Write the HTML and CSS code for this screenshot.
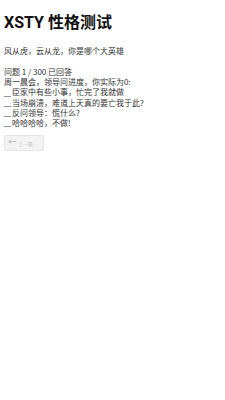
FILE: index.html
```html
<html>
  <head>
    <meta charset="utf-8">
    <link rel="stylesheet" href="styles.css">
  </head>
  <body>
    <h1 class="title">XSTY 性格测试</h1>
    <p class="slogan">风从虎，云从龙，你是哪个大英雄</p>
    <div class="quiz">
      <div class="progress">问题 1 / 300 已回答</div>
      <div class="question">周一晨会，领导问进度，你实际为0:</div>
      <label class="option"><span class="radio"></span>臣家中有些小事，忙完了我就做</label>
      <label class="option"><span class="radio"></span>当场崩溃，难道上天真的要亡我于此?</label>
      <label class="option"><span class="radio"></span>反问领导：慌什么?</label>
      <label class="option"><span class="radio"></span>哈哈哈哈，不做!</label>
      <button class="prev" disabled><span class="arrow">&larr;</span><span class="prev-text">上一题</span></button>
    </div>
  </body>
</html>
```

FILE: styles.css
```css
body {
  margin: 4px;
  font-family: "Noto Sans CJK SC", "Noto Sans", sans-serif;
  color: #222;
  background: #fff;
}

.title {
  margin: 9px 0 0;
  font-family: Roboto, "Noto Sans CJK SC", sans-serif;
  font-size: 16px;
  font-weight: bold;
  line-height: 20px;
  color: #111;
}

.slogan {
  margin: 13px 0 0;
  font-size: 8px;
  line-height: 10px;
  color: #333;
}

.quiz {
  margin-top: 11px;
  font-size: 8px;
  line-height: 10.2px;
  color: #333;
}

.option {
  display: flex;
  align-items: flex-end;
}

.radio {
  width: 7px;
  height: 1px;
  margin: 0 1px 1px 0;
  background: #999;
}

.prev {
  display: flex;
  align-items: center;
  gap: 2px;
  margin-top: 7px;
  width: 40px;
  height: 16px;
  padding: 0 3px;
  background: #f3f3f3;
  border: 1px solid #e6e6e6;
  border-radius: 2px;
  color: #bbb;
}

.arrow {
  font-family: "DejaVu Sans", sans-serif;
  font-size: 10px;
  line-height: 10px;
  margin-top: -2px;
}

.prev-text {
  font-size: 5px;
  line-height: 5px;
  padding-top: 3px;
}
```
